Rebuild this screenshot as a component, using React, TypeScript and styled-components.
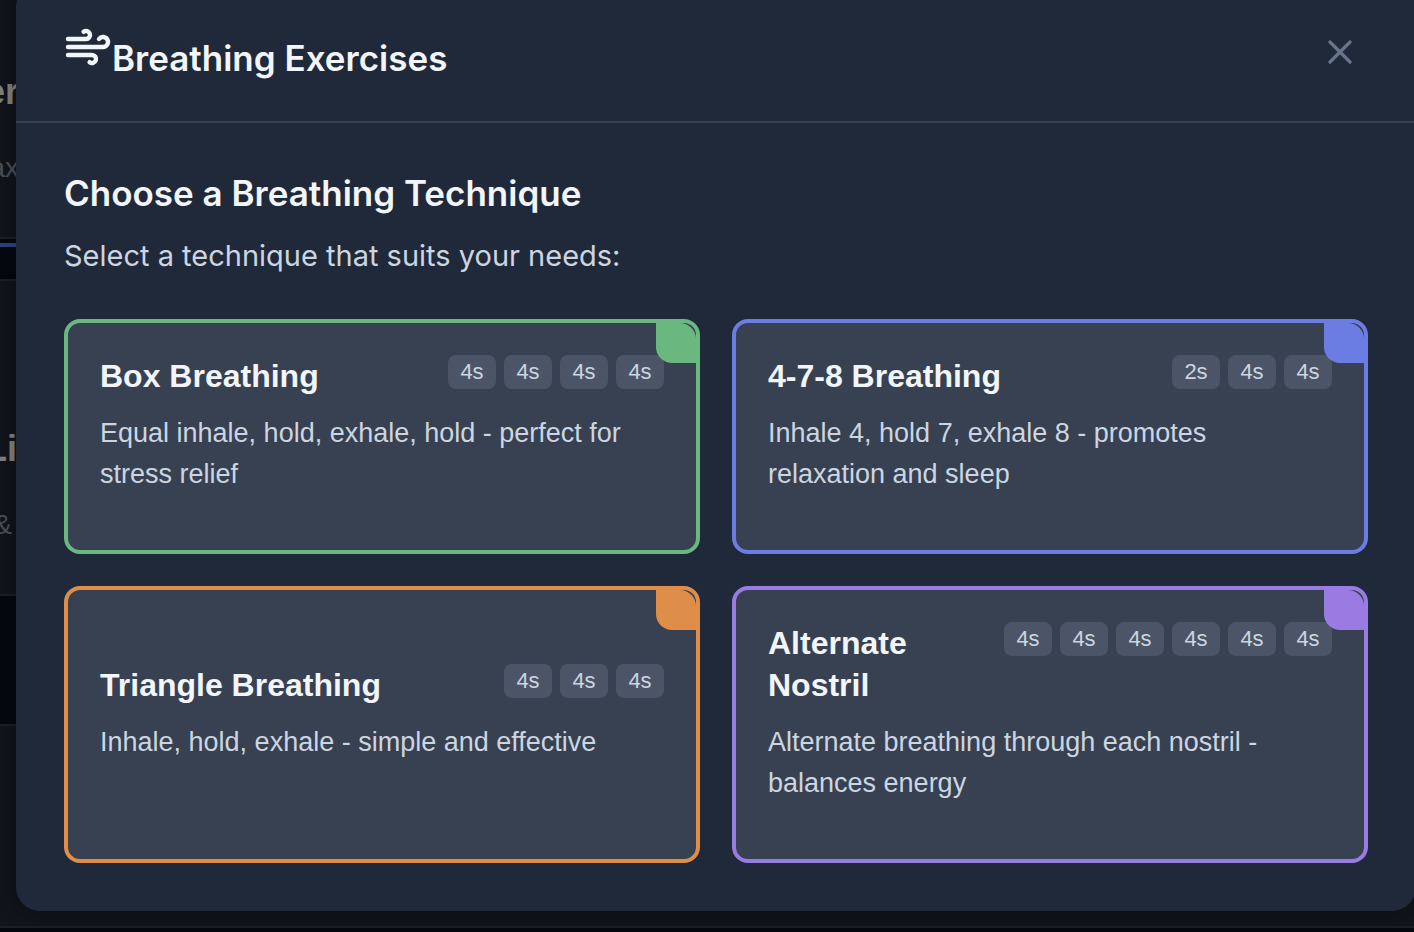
import React from 'react';
import styled, { createGlobalStyle } from 'styled-components';
import { Wind, X } from 'lucide-react';

const GlobalStyle = createGlobalStyle`
  *, *::before, *::after { box-sizing: border-box; }
  body {
    margin: 0;
    background: #05070f;
    font-family: Inter, 'Liberation Sans', sans-serif;
  }
  h2, h3, p { margin: 0; }
`;

const Screen = styled.div`
  position: relative;
  min-height: 100vh;
  overflow: hidden;
`;

const Backdrop = styled.div`
  position: absolute;
  inset: 0;
  overflow: hidden;
  font-family: 'Liberation Sans', Arial, sans-serif;
`;

const Panel = styled.div<{ $height: number }>`
  height: ${(p) => p.$height}px;
  background: #10141b;
  border-bottom: 2px solid #1b1f27;
  & + & { border-top: 2px solid #1b1f27; }
`;

const Strip = styled.div<{ $height: number }>`
  height: ${(p) => p.$height}px;
  padding-top: 4px;
  border-bottom: 2px solid #1b1f27;
`;

const ActiveTab = styled.div`
  height: 4px;
  background: #2a4380;
`;

const PanelText = styled.div<{ $top: number; $width: number }>`
  display: flex;
  flex-direction: column;
  align-items: flex-end;
  width: ${(p) => p.$width}px;
  padding-top: ${(p) => p.$top}px;
  white-space: nowrap;
`;

const PanelTitle = styled.div`
  font-size: 36px;
  line-height: 42px;
  font-weight: 700;
  color: #808080;
`;

const PanelNote = styled.div<{ $inset?: number }>`
  margin-top: 36px;
  padding-right: ${(p) => p.$inset ?? 0}px;
  font-size: 28px;
  line-height: 38px;
  color: #4b4f57;
`;

const Overlay = styled.div`
  position: relative;
  overflow: hidden;
  padding: 0 0 21px 16px;
`;

const Dialog = styled.section`
  margin: -17px -2px 0 0;
  border-radius: 24px;
  background: #20293a;
  box-shadow: 0 0 24px rgba(0, 0, 0, 0.3);
`;

const Header = styled.header`
  display: flex;
  align-items: center;
  justify-content: space-between;
  padding: 40px 48px;
  border-bottom: 2px solid #364152;
`;

const Title = styled.h2`
  font-size: 35px;
  line-height: 46px;
  font-weight: 600;
  color: #f2f5f9;
  svg { vertical-align: baseline; }
`;

const CloseButton = styled.button`
  display: flex;
  padding: 8px;
  border: 0;
  background: none;
  color: #68748a;
  cursor: pointer;
`;

const Body = styled.div`
  padding: 48px;
`;

const SectionTitle = styled.h3`
  font-size: 35px;
  line-height: 44px;
  font-weight: 600;
  color: #f2f5f9;
`;

const Lead = styled.p`
  margin-top: 18px;
  font-size: 29px;
  line-height: 46px;
  color: #ccd5e0;
`;

const Grid = styled.div`
  display: grid;
  grid-template-columns: repeat(2, minmax(0, 1fr));
  gap: 32px;
  margin-top: 40px;
`;

const Card = styled.button<{ $accent: string }>`
  position: relative;
  padding: 32px;
  border: 4px solid ${(p) => p.$accent};
  border-radius: 16px;
  background: #374152;
  font-family: 'Liberation Sans', Arial, sans-serif;
  text-align: left;
  cursor: pointer;
  &::after {
    content: '';
    position: absolute;
    top: 0;
    right: 0;
    width: 40px;
    height: 40px;
    border-radius: 0 16px;
    background: ${(p) => p.$accent};
  }
`;

const CardHead = styled.span`
  display: flex;
  align-items: flex-start;
  justify-content: space-between;
`;

const CardTitle = styled.span`
  font-size: 32px;
  line-height: 42px;
  font-weight: 700;
  color: #f2f5f9;
`;

const Steps = styled.span`
  display: flex;
  flex-shrink: 0;
  gap: 8px;
`;

const Step = styled.span`
  min-width: 48px;
  padding: 4px 12px;
  border-radius: 8px;
  background: #4b5567;
  font-size: 22px;
  line-height: 26px;
  text-align: center;
  color: #ccd5e0;
`;

const Description = styled.span`
  display: block;
  margin: 16px 0 23px;
  padding-right: 4px;
  font-size: 27px;
  line-height: 41px;
  color: #ccd5e0;
`;

const techniques = [
  {
    name: 'Box Breathing',
    accent: '#6ab780',
    steps: ['4s', '4s', '4s', '4s'],
    text: 'Equal inhale, hold, exhale, hold - perfect for stress relief',
  },
  {
    name: '4-7-8 Breathing',
    accent: '#6b7de2',
    steps: ['2s', '4s', '4s'],
    text: 'Inhale 4, hold 7, exhale 8 - promotes relaxation and sleep',
  },
  {
    name: 'Triangle Breathing',
    accent: '#de8e49',
    steps: ['4s', '4s', '4s'],
    text: 'Inhale, hold, exhale - simple and effective',
  },
  {
    name: 'Alternate Nostril',
    accent: '#9a7be2',
    steps: ['4s', '4s', '4s', '4s', '4s', '4s'],
    text: 'Alternate breathing through each nostril - balances energy',
  },
];

export default function App() {
  return (
    <>
      <GlobalStyle />
      <Screen>
        <Backdrop aria-hidden="true">
          <Panel $height={239}>
            <PanelText $top={71} $width={19}>
              <PanelTitle>er</PanelTitle>
              <PanelNote>ax</PanelNote>
            </PanelText>
          </Panel>
          <Strip $height={42}>
            <ActiveTab />
          </Strip>
          <Panel $height={315}>
            <PanelText $top={147} $width={17}>
              <PanelTitle>Li</PanelTitle>
              <PanelNote $inset={5}>&amp;</PanelNote>
            </PanelText>
          </Panel>
          <Strip $height={130} />
          <Panel $height={202} />
        </Backdrop>
        <Overlay>
          <Dialog role="dialog" aria-labelledby="dialog-title">
            <Header>
              <Title id="dialog-title">
                <Wind size={48} strokeWidth={2.2} aria-hidden="true" />
                Breathing Exercises
              </Title>
              <CloseButton type="button" aria-label="Close">
                <X size={40} />
              </CloseButton>
            </Header>
            <Body>
              <SectionTitle>Choose a Breathing Technique</SectionTitle>
              <Lead>Select a technique that suits your needs:</Lead>
              <Grid>
                {techniques.map((t) => (
                  <Card key={t.name} type="button" $accent={t.accent}>
                    <CardHead>
                      <CardTitle>{t.name}</CardTitle>
                      <Steps>
                        {t.steps.map((s, i) => (
                          <Step key={i}>{s}</Step>
                        ))}
                      </Steps>
                    </CardHead>
                    <Description>{t.text}</Description>
                  </Card>
                ))}
              </Grid>
            </Body>
          </Dialog>
        </Overlay>
      </Screen>
    </>
  );
}
